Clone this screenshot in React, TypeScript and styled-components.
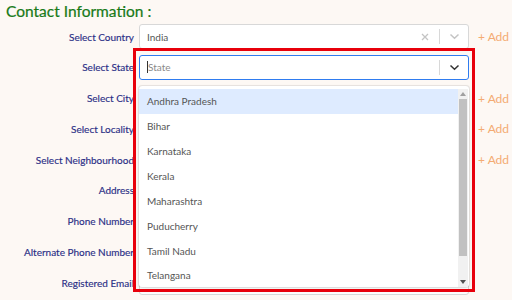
import React from "react";
import styled, { createGlobalStyle } from "styled-components";

const Global = createGlobalStyle`
  html, body { margin: 0; padding: 0; background: #fdf8f4; }
  body { font-family: Lato, "Open Sans", sans-serif; overflow: hidden; }
`;

const Page = styled.div`
  width: 512px;
  height: 300px;
  background: #fdf8f4;
  overflow: hidden;
  position: relative;
`;

const Title = styled.h2`
  margin: 0;
  padding: 1px 0 0 6px;
  height: 22px;
  font-size: 15.5px;
  font-weight: 400;
  color: #187a18;
  line-height: 20px;
  -webkit-text-stroke: 0.2px #187a18;
`;

const Form = styled.div`
  display: grid;
  grid-template-columns: 133px 330px auto;
  column-gap: 6px;
  row-gap: 5.8px;
  grid-auto-rows: 25px;
  margin-top: 1px;
`;

const Label = styled.div`
  justify-self: end;
  align-self: center;
  font-size: 10px;
  color: #2b2f86;
  white-space: nowrap;
  margin-right: -1px;
  -webkit-text-stroke: 0.15px #2b2f86;
`;

const Field = styled.div<{ $focus?: boolean }>`
  position: relative;
  box-sizing: border-box;
  height: 25px;
  background: #fff;
  border: 1px solid ${(p) => (p.$focus ? "#2f7cf0" : "#d8d8d8")};
  border-radius: 3px;
  display: flex;
  align-items: center;
  padding-left: 7px;
  font-size: 10px;
  color: #555;
`;

const Value = styled.span`
  flex: 1;
`;

const Placeholder = styled.span`
  flex: 1;
  color: #8a8a8a;
  display: flex;
  align-items: center;
`;

const Caret = styled.span`
  display: inline-block;
  width: 1px;
  height: 12px;
  background: #333;
`;

const Indicators = styled.div`
  display: flex;
  align-items: center;
  height: 100%;
`;

const IconBox = styled.div`
  width: 28px;
  display: flex;
  align-items: center;
  justify-content: center;
`;

const Sep = styled.div`
  width: 1px;
  height: 15px;
  background: #d8d8d8;
`;

const Add = styled.div`
  align-self: center;
  font-size: 12px;
  color: #f4ab72;
  white-space: nowrap;
  padding-left: 3px;
`;

const Highlight = styled.div`
  position: absolute;
  left: -7px;
  top: -8px;
  width: 342px;
  height: 244px;
  box-sizing: border-box;
  border: 3px solid #e8000b;
  pointer-events: none;
  z-index: 3;
`;

const Menu = styled.div`
  position: absolute;
  left: -1px;
  top: 30px;
  width: 330px;
  height: 201px;
  background: #fff;
  border-radius: 3px;
  box-shadow: 0 0 0 1px rgba(0, 0, 0, 0.08), 0 3px 6px rgba(0, 0, 0, 0.08);
  display: flex;
  padding: 3px 0 0 0;
  box-sizing: border-box;
  overflow: hidden;
  z-index: 2;
`;

const Options = styled.div`
  flex: 1;
  display: flex;
  flex-direction: column;
`;

const Option = styled.div<{ $active?: boolean }>`
  height: 24.9px;
  flex-shrink: 0;
  display: flex;
  align-items: center;
  padding-left: 8px;
  font-size: 10px;
  color: #555;
  background: ${(p) => (p.$active ? "#deebff" : "transparent")};
`;

const Scrollbar = styled.div`
  width: 10px;
  background: #f1f1f1;
  display: flex;
  flex-direction: column;
  align-items: center;
  margin-right: 1px;
`;

const Arrow = styled.div`
  height: 10px;
  display: flex;
  align-items: center;
  justify-content: center;
`;

const Thumb = styled.div`
  width: 8px;
  height: 157px;
  background: #c1c1c1;
`;

const Track = styled.div`
  flex: 1;
`;

const X = () => (
  <svg width="10" height="10" viewBox="0 0 10 10">
    <path d="M2 2 L8 8 M8 2 L2 8" stroke="#c4c4c4" strokeWidth="1.3" />
  </svg>
);

const Chevron = ({ color }: { color: string }) => (
  <svg width="11" height="7" viewBox="0 0 11 7">
    <path d="M1.5 1.5 L5.5 5.3 L9.5 1.5" stroke={color} strokeWidth="1.5" fill="none" />
  </svg>
);

const states = [
  "Andhra Pradesh",
  "Bihar",
  "Karnataka",
  "Kerala",
  "Maharashtra",
  "Puducherry",
  "Tamil Nadu",
  "Telangana",
];

const labels = [
  "Select Country",
  "Select State",
  "Select City",
  "Select Locality",
  "Select Neighbourhood",
  "Address",
  "Phone Number",
  "Alternate Phone Number",
  "Registered Email",
];

const withAdd = [true, false, true, true, true, false, false, false, false];

export default function App() {
  return (
    <Page>
      <Global />
      <Title>Contact Information :</Title>
      <Form>
        {labels.map((l, i) => (
          <React.Fragment key={l}>
            <Label>{l}</Label>
            {i === 0 ? (
              <Field>
                <Value>India</Value>
                <Indicators>
                  <IconBox>
                    <X />
                  </IconBox>
                  <Sep />
                  <IconBox>
                    <Chevron color="#c4c4c4" />
                  </IconBox>
                </Indicators>
              </Field>
            ) : i === 1 ? (
              <Field $focus>
                <Placeholder>
                  <Caret />
                  State
                </Placeholder>
                <Indicators>
                  <Sep />
                  <IconBox>
                    <Chevron color="#333" />
                  </IconBox>
                </Indicators>
                <Highlight />
                <Menu>
                  <Options>
                    {states.map((s, j) => (
                      <Option key={s} $active={j === 0}>
                        {s}
                      </Option>
                    ))}
                  </Options>
                  <Scrollbar>
                    <Arrow>
                      <svg width="6" height="4" viewBox="0 0 6 4">
                        <path d="M0 4 L3 0 L6 4 Z" fill="#a0a0a0" />
                      </svg>
                    </Arrow>
                    <Thumb />
                    <Track />
                    <Arrow>
                      <svg width="6" height="4" viewBox="0 0 6 4">
                        <path d="M0 0 L3 4 L6 0 Z" fill="#505050" />
                      </svg>
                    </Arrow>
                  </Scrollbar>
                </Menu>
              </Field>
            ) : (
              <Field />
            )}
            {withAdd[i] ? <Add>+ Add</Add> : <div />}
          </React.Fragment>
        ))}
      </Form>
    </Page>
  );
}
